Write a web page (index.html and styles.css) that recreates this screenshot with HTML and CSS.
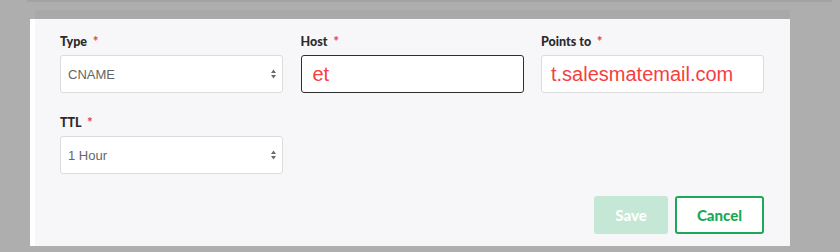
FILE: index.html
```html
<!DOCTYPE html>
<html>
<head>
<meta charset="utf-8">
<link rel="stylesheet" href="styles.css">
</head>
<body>
<div class="topline"></div>
<div class="strip"></div>
<div class="panel">
  <div class="grid">
    <div class="field">
      <label class="label">Type <span class="req">*</span></label>
      <div class="control select">
        <span class="val">CNAME</span>
        <svg class="arrows" width="5" height="10" viewBox="0 0 5 10"><path d="M0 4 L2.5 0.5 L5 4 Z M0 6 L5 6 L2.5 9.5 Z" fill="#6b6b6b"/></svg>
      </div>
    </div>
    <div class="field">
      <label class="label">Host <span class="req">*</span></label>
      <div class="control input focused"><span class="typed">et</span></div>
    </div>
    <div class="field">
      <label class="label">Points to <span class="req">*</span></label>
      <div class="control input"><span class="typed">t.salesmatemail.com</span></div>
    </div>
    <div class="field">
      <label class="label">TTL <span class="req">*</span></label>
      <div class="control select">
        <span class="val">1 Hour</span>
        <svg class="arrows" width="5" height="10" viewBox="0 0 5 10"><path d="M0 4 L2.5 0.5 L5 4 Z M0 6 L5 6 L2.5 9.5 Z" fill="#6b6b6b"/></svg>
      </div>
    </div>
  </div>
  <div class="actions">
    <button class="btn save">Save</button>
    <button class="btn cancel">Cancel</button>
  </div>
</div>
</body>
</html>
```
FILE: styles.css
```css
html, body {
  margin: 0;
  padding: 0;
}
body {
  width: 840px;
  height: 252px;
  background: #aeaeae;
  overflow: hidden;
  font-family: "Liberation Sans", Arial, sans-serif;
}
.topline {
  margin-left: 27px;
  width: 805px;
  height: 2px;
  background: #a3a3a3;
}
.strip {
  margin-top: 8px;
  margin-left: 35px;
  width: 755px;
  height: 9px;
  background: #a9a9aa;
}
.panel {
  box-sizing: border-box;
  margin-left: 30px;
  width: 760px;
  height: 227px;
  background: #f7f6f9;
  border-left: 5px solid #ffffff;
  padding: 15px 26px 0 25px;
}
.grid {
  display: grid;
  grid-template-columns: 223px 223px 223px;
  column-gap: 17.5px;
  row-gap: 22px;
}
.field {
  display: flex;
  flex-direction: column;
}
.label {
  font-family: Lato, "Open Sans", sans-serif;
  font-weight: 900;
  font-size: 12.5px;
  line-height: 16px;
  color: #2b2b2b;
  margin-bottom: 5px;
}
.req {
  color: #e8443a;
  margin-left: 3px;
}
.control {
  box-sizing: border-box;
  height: 38px;
  background: #ffffff;
  border: 1px solid #dcdcdc;
  border-radius: 3px;
  display: flex;
  align-items: center;
}
.select {
  justify-content: space-between;
  padding: 0 6px 0 7px;
}
.val {
  font-size: 13px;
  color: #666666;
}
.arrows {
  display: block;
}
.input {
  padding: 0 0 0 9px;
}
.input.focused {
  border: 1.3px solid #2f2f2f;
  padding-left: 11px;
}
.typed {
  font-size: 20px;
  color: #f5403f;
}
.actions {
  margin-top: 22px;
  display: flex;
  justify-content: flex-end;
  gap: 7px;
}
.btn {
  box-sizing: border-box;
  height: 38px;
  border-radius: 3px;
  font-family: Lato, "Open Sans", sans-serif;
  font-weight: 900;
  font-size: 15px;
  padding: 0;
  cursor: pointer;
}
.save {
  width: 74px;
  background: #c4e8d5;
  border: none;
  color: #ffffff;
}
.cancel {
  width: 89px;
  background: #ffffff;
  border: 2px solid #1ba958;
  color: #1ba958;
}
```
